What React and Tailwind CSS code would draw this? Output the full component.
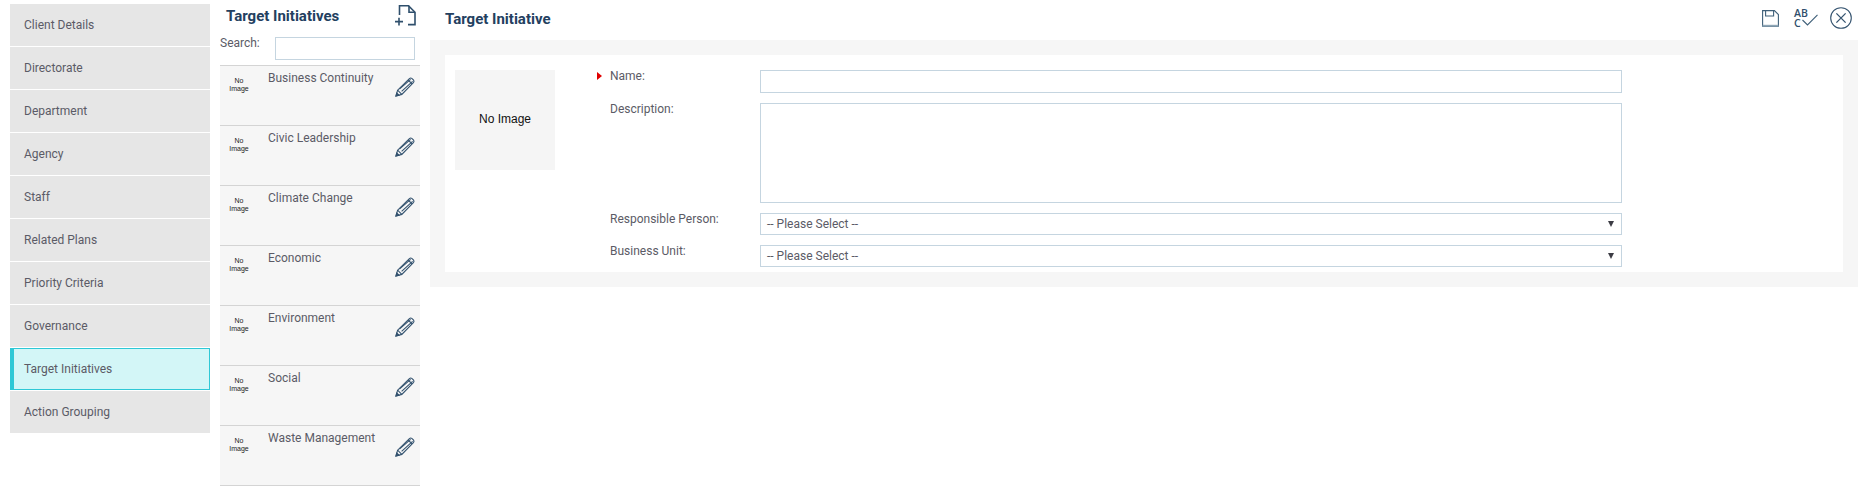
import React from "react";

const navItems = [
  "Client Details",
  "Directorate",
  "Department",
  "Agency",
  "Staff",
  "Related Plans",
  "Priority Criteria",
  "Governance",
  "Target Initiatives",
  "Action Grouping",
];

const initiatives = [
  "Business Continuity",
  "Civic Leadership",
  "Climate Change",
  "Economic",
  "Environment",
  "Social",
  "Waste Management",
];

const PencilIcon = () => (
  <svg width="20" height="20" viewBox="0 0 20 20" fill="none" stroke="#34536f" strokeWidth="1.1">
    <path d="M1 19 L2.6 13.2 L14.4 1.6 Q15.6 .6 16.8 1.4 L18.6 3.2 Q19.4 4.4 18.4 5.6 L6.8 17.4 Z" />
    <path d="M2.6 13.2 L6.8 17.4 M4.4 12 L15.6 2.4 M6.6 14.4 L17.6 4.4 M13.2 3 L17 6.8" />
    <path d="M1 19 L1.8 16 L4 18.2 Z" fill="#34536f" />
  </svg>
);

const AddFileIcon = () => (
  <svg width="21" height="21" viewBox="0 0 21 21" fill="none" stroke="#2f4f6c" strokeWidth="1.6">
    <path d="M4.5 10 V.8 H13.5 L20 7.3 V19.6 H13" />
    <path d="M14 .8 V7.3 H20" />
    <path d="M0 16.6 H8 M4 12.8 V20.4" />
  </svg>
);

const SaveIcon = () => (
  <svg width="17" height="17" viewBox="0 0 17 17" fill="none" stroke="#3f6079" strokeWidth="1.1">
    <path d="M.6 .6 H12.4 L16.4 4.6 V16.2 H.6 Z" />
    <path d="M3.6 .6 V6 H11.6 V.6" />
    <path d="M.6 15.6 H16.4" strokeWidth="1.6" stroke="#8fa6b6" />
  </svg>
);

const SpellIcon = () => (
  <div className="relative h-[20px] w-[24px] font-['Open_Sans',sans-serif] text-[10.5px] leading-[10px] font-semibold text-[#2f4f6c]">
    <div>AB</div>
    <div>C</div>
    <svg className="absolute top-[6px] left-[8px]" width="16" height="12" viewBox="0 0 16 12" fill="none" stroke="#3f6079" strokeWidth="1.1">
      <path d="M.5 6 L5.5 11 L15.5 .8" />
    </svg>
  </div>
);

const CloseIcon = () => (
  <svg width="22" height="22" viewBox="0 0 22 22" fill="none" stroke="#34536f" strokeWidth="1.1">
    <circle cx="11" cy="11" r="10.3" />
    <path d="M6.4 6.4 L15.6 15.6 M15.6 6.4 L6.4 15.6" strokeWidth="1.3" />
  </svg>
);

const Label = ({ children }) => (
  <div className="relative -mt-[1px] w-[164px] shrink-0 pl-[14px] text-[12px] leading-[15px] text-[#5b5b66]">
    {children}
  </div>
);

const SelectBox = () => (
  <div className="flex h-[22px] flex-1 items-center justify-between border border-[#c5d5e0] pr-[7px] pl-[6px] text-[12px] text-[#5b5b66]">
    <span>-- Please Select --</span>
    <span className="h-0 w-0 border-x-[3.5px] border-t-[6px] border-x-transparent border-t-[#3c3c44]" />
  </div>
);

export default function App() {
  return (
    <div className="flex h-[490px] w-[1863px] overflow-hidden bg-white font-['Roboto',sans-serif]">
      <nav className="mt-[4px] ml-[10px] flex w-[200px] shrink-0 flex-col self-start">
        {navItems.map((label, i) =>
          label === "Target Initiatives" ? (
            <div
              key={label}
              className="mb-[1px] flex h-[42px] items-center border border-l-[4px] border-[#2ec8d6] bg-[#d3f6f7] pl-[10px] text-[12px] text-[#5b5b66]"
            >
              {label}
            </div>
          ) : (
            <div
              key={label}
              className={`flex h-[42px] items-center bg-[#e6e6e6] pl-[14px] text-[12px] text-[#5b5b66] ${
                i < navItems.length - 1 ? "mb-[1px]" : ""
              }`}
            >
              {label}
            </div>
          )
        )}
      </nav>

      <section className="ml-[10px] w-[200px] shrink-0">
        <div className="flex h-[37px] items-start justify-between pt-[5px] pr-[4px] pl-[6px]">
          <h2 className="pt-[1px] text-[15px] leading-[20px] font-bold text-[#23405f]">Target Initiatives</h2>
          <AddFileIcon />
        </div>
        <div className="flex h-[28px] items-start justify-between pr-[5px]">
          <span className="-mt-[1px] text-[12px] leading-[14px] text-[#5b5b66]">Search:</span>
          <div className="h-[23px] w-[140px] border border-[#c5d5e0]" />
        </div>
        <ul className="border-t border-[#d4d4d4]">
          {initiatives.map((name) => (
            <li key={name} className="flex h-[60px] border-b border-[#d4d4d4] bg-[#f6f6f6]">
              <div className="w-[48px] shrink-0 pt-[11px] pr-[10px] text-center font-['Liberation_Sans',sans-serif] text-[7px] leading-[8px] text-[#222]">
                No
                <br />
                Image
              </div>
              <div className="flex-1 pt-[5px] text-[12px] leading-[15px] text-[#5b5b66]">{name}</div>
              <div className="w-[32px] shrink-0 pt-[11px] pl-[7px]">
                <PencilIcon />
              </div>
            </li>
          ))}
        </ul>
      </section>

      <main className="ml-[10px] w-[1428px] shrink-0">
        <header className="flex h-[40px] items-start justify-between pt-[7px] pl-[15px]">
          <h1 className="pt-[2px] text-[15px] leading-[20px] font-bold text-[#23405f]">Target Initiative</h1>
          <div className="flex items-start pr-[6px]">
            <div className="mt-[3px] mr-[15px]"><SaveIcon /></div>
            <div className="mt-[1px] mr-[12px]"><SpellIcon /></div>
            <CloseIcon />
          </div>
        </header>

        <div className="h-[247px] bg-[#f6f6f6] p-[15px]">
          <div className="flex h-[217px] bg-white pt-[15px] pl-[10px]">
            <div className="flex h-[100px] w-[100px] shrink-0 items-center justify-center bg-[#f5f5f5] pb-[2px] font-['Liberation_Sans',sans-serif] text-[12px] text-[#111]">
              No Image
            </div>
            <div className="ml-[41px] flex w-[1026px] flex-col">
              <div className="flex h-[23px]">
                <Label>
                  <span className="absolute top-[3px] left-[1px] h-0 w-0 border-y-[4px] border-l-[5px] border-y-transparent border-l-[#e00000]" />
                  Name:
                </Label>
                <div className="flex-1 border border-[#c5d5e0]" />
              </div>
              <div className="mt-[10px] flex h-[100px]">
                <Label>Description:</Label>
                <div className="flex-1 border border-[#c5d5e0]" />
              </div>
              <div className="mt-[10px] flex h-[22px]">
                <Label>Responsible Person:</Label>
                <SelectBox />
              </div>
              <div className="mt-[10px] flex h-[22px]">
                <Label>Business Unit:</Label>
                <SelectBox />
              </div>
            </div>
          </div>
        </div>
      </main>
    </div>
  );
}
